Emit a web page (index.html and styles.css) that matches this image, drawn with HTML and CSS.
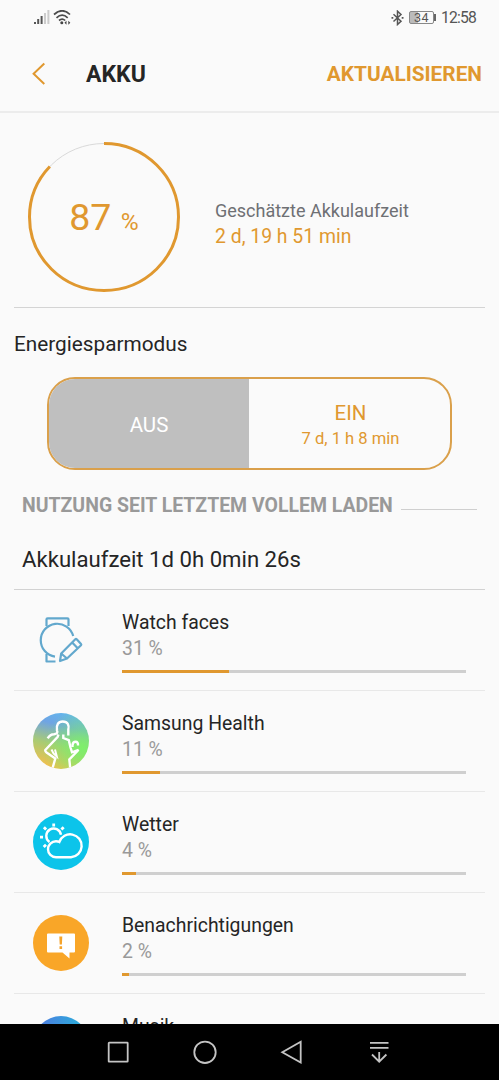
FILE: index.html
```html
<!DOCTYPE html>
<html lang="de">
<head>
  <meta charset="UTF-8" />
  <meta name="viewport" content="width=device-width, initial-scale=1.0"/>
  <title>Akku</title>
  <link rel="stylesheet" href="styles.css">
</head>
<body>
  <div class="screen">
    <div class="status-bar">
      <svg class="signal" width="37" height="16" viewBox="0 0 37 16">
        <g fill="#555">
          <rect x="0" y="12" width="2" height="2"/>
          <rect x="3.2" y="9" width="2" height="5"/>
          <rect x="6.6" y="6" width="2" height="8"/>
        </g>
        <g fill="#ccc">
          <rect x="10" y="3" width="2" height="11"/>
          <rect x="13.4" y="0" width="2" height="14"/>
        </g>
        <g fill="none" stroke="#4b4b4b" stroke-width="1.7">
          <path d="M20 4.5Q28.2-3 36 4.5"/>
          <path d="M22.5 7.8Q28.2 2.6 33.7 7.8"/>
          <path d="M25 10.5Q28.2 7.7 31.2 10.5"/>
        </g>
        <circle cx="27.8" cy="12.7" r="1.5" fill="#444"/>
        <path d="M30.5 12.7l2-2v4zM36.3 12.7l-2-2v4z" fill="#444"/>
      </svg>
      <div class="status-right">
        <svg width="13" height="16" viewBox="0 0 13 16" fill="none" stroke="#555" stroke-width="1.5">
          <path d="M2.5 4.3L10 11.2L6.5 14.5V1.2L10 4.5L2.5 11.5"/>
          <path d="M.5 7.9H2.3M10.7 7.9H12.5" stroke-width="1.8"/>
        </svg>
        <div class="battery"><span>34</span></div>
        <span class="clock">12:58</span>
      </div>
    </div>

    <div class="header">
      <svg width="14" height="24" viewBox="0 0 14 24" fill="none" stroke="#e0982f" stroke-width="2">
        <path d="M12.3 1.5L1.6 11.7L12.3 22"/>
      </svg>
      <h1>AKKU</h1>
      <button>AKTUALISIEREN</button>
    </div>

    <div class="summary">
      <div class="gauge">
        <svg width="154" height="152" viewBox="0 0 154 152" fill="none">
          <ellipse cx="77" cy="76" rx="74.5" ry="73.5" stroke="#d9d9d9"/>
          <ellipse class="gauge-value" cx="77" cy="76" rx="73.5" ry="74.5" pathLength="100" transform="rotate(-90 77 76)"/>
        </svg>
        <div class="gauge-text">87 <small>%</small></div>
      </div>
      <div class="estimate">
        <p>Geschätzte Akkulaufzeit</p>
        <p class="time">2 d, 19 h 51 min</p>
      </div>
    </div>

    <h2 class="mode-title">Energiesparmodus</h2>
    <div class="toggle">
      <div class="option off">AUS</div>
      <div class="option on">
        <span>EIN</span>
        <small>7 d, 1 h 8 min</small>
      </div>
    </div>

    <div class="section-title"><span>NUTZUNG SEIT LETZTEM VOLLEM LADEN</span></div>
    <div class="runtime"><span>Akkulaufzeit 1d 0h 0min 26s</span></div>

    <div class="list">
      <div class="item">
        <svg class="icon watch" width="56" height="56" viewBox="0 0 56 56" fill="none" stroke="#62a8cd" stroke-width="2.2" stroke-linejoin="round">
          <path d="M13.5 14V7.3q0-1 1-1H34.5q1 0 1 1V14"/>
          <path d="M40.2 24A16.5 16.5 0 1 0 22 44.6"/>
          <path d="M13.5 42V49.5H22.5"/>
          <path d="M27 49L28.2 41.5L42.3 27.2Q43 26.5 43.7 27.2L48 32Q48.6 32.7 48 33.3L34 46.5ZM28.2 41.5L34 46.5M39.2 30.5L44.7 36.3"/>
        </svg>
        <div class="info">
          <div class="name">Watch faces</div>
          <div class="percent">31 %</div>
          <div class="bar"><div style="width: 31%"></div></div>
        </div>
      </div>

      <div class="item">
        <svg class="icon health" width="56" height="56" viewBox="0 0 56 56" fill="none" stroke="#fff" stroke-width="2.4">
          <path d="M14.7 25.3Q17 21.3 21 21.2Q25.5 20.5 24 17.5C23 11.5 25.5 8.5 29.7 8.5C35 8.5 36.3 12.5 35.3 16.5V22.5"/>
          <path d="M25.5 21.5L24.5 24L12.3 37Q12 38.5 13.5 39.5L22.3 45.5L19.3 56"/>
          <path d="M30.3 21.5V25L35.8 27.2L37.5 34.5L39 39.3L45.5 37L36.3 46.5L37.3 56"/>
          <path d="M39.5 34V32Q40 28.8 42.5 28.8Q45.3 28.8 45 32.5"/>
          <path d="M18.5 36.5L20.5 40.5L23.8 43.5L22 36.5" stroke-width="2"/>
        </svg>
        <div class="info">
          <div class="name">Samsung Health</div>
          <div class="percent">11 %</div>
          <div class="bar"><div style="width: 11%"></div></div>
        </div>
      </div>

      <div class="item">
        <svg class="icon weather" width="56" height="56" viewBox="0 0 56 56" fill="none" stroke="#fff" stroke-width="2.4">
          <path d="M16.5 28A7.4 7.4 0 1 1 28 20.8"/>
          <path d="M23 43.3A8 8 0 0 1 23 27.3Q24.8 27.3 26.3 28A11.5 11.5 0 1 1 38 43.3Z"/>
          <path d="M20.7 9.5v3M30.7 13.3l-2.3 2.3M10.9 13.3l2.2 2.2M7 23.2h3M10.7 33l2.3-2.3" stroke-width="2.8"/>
        </svg>
        <div class="info">
          <div class="name">Wetter</div>
          <div class="percent">4 %</div>
          <div class="bar"><div style="width: 4%"></div></div>
        </div>
      </div>

      <div class="item">
        <svg class="icon notify" width="56" height="56" viewBox="0 0 56 56">
          <path d="M15 18.5H41Q42 18.5 42 19.5V36.5Q42 37.5 41 37.5H36.5V43.5L29.5 37.5H15Q14 37.5 14 36.5V19.5Q14 18.5 15 18.5Z" fill="#fff"/>
          <path d="M26.3 21.5h3l-.4 8h-2.2zM26.5 31.3h2.6v2.6h-2.6z" fill="#f5a32a"/>
        </svg>
        <div class="info">
          <div class="name">Benachrichtigungen</div>
          <div class="percent">2 %</div>
          <div class="bar"><div style="width: 2%"></div></div>
        </div>
      </div>

      <div class="item">
        <div class="icon music"></div>
        <div class="info">
          <div class="name">Musik</div>
        </div>
      </div>
    </div>

    <div class="nav-bar">
      <svg width="24" height="24" viewBox="0 0 24 24"><rect x="2.7" y="2.7" width="19" height="19" rx=".5"/></svg>
      <svg width="24" height="24" viewBox="0 0 24 24"><circle cx="12" cy="12.3" r="10.7"/></svg>
      <svg width="24" height="24" viewBox="0 0 24 24"><path d="M20.7 1.7V22.5L2.3 12.2Z"/></svg>
      <svg width="24" height="24" viewBox="0 0 24 24"><path d="M3 2.8H21.5M3 7.8H21.5M12.2 12V21.5M5 14.5L12.2 21.7L19.4 14.5"/></svg>
    </div>
  </div>
</body>
</html>
```
FILE: styles.css
```css
* {
  box-sizing: border-box;
}

body {
  margin: 0;
  font-family: Roboto, sans-serif;
  background: #fafafa;
  color: #252525;
}

h1, h2, p {
  margin: 0;
}

.screen {
  width: 499px;
  height: 1080px;
  display: flex;
  flex-direction: column;
  overflow: hidden;
}

.status-bar {
  height: 34px;
  flex: none;
  display: flex;
  justify-content: space-between;
  align-items: center;
  padding: 1px 23px 0 34px;
}

.status-right {
  display: flex;
  align-items: center;
  gap: 5px;
}

.battery {
  width: 25px;
  height: 13px;
  border: 1px solid #888;
  border-radius: 2px;
  background: linear-gradient(to right, #bbb 34%, transparent 34%);
  font-size: 12.5px;
  line-height: 11px;
  letter-spacing: 0.5px;
  color: #555;
  margin-right: 2px;
  display: flex;
  padding-left: 4px;
}

.battery::after {
  content: "";
  flex: none;
  width: 2px;
  height: 7px;
  margin: 2px 0 0 5px;
  background: #666;
}

.clock {
  font-size: 15.7px;
  letter-spacing: -0.8px;
  color: #555;
}

.header {
  height: 79px;
  flex: none;
  display: flex;
  align-items: center;
  padding: 3px 17px 0 32px;
  border-bottom: 2px solid #ececec;
}

.header h1 {
  margin-left: 40px;
  font-size: 23px;
  font-weight: bold;
}

.header button {
  margin-left: auto;
  padding: 0;
  border: none;
  background: none;
  font: bold 20.8px Roboto, sans-serif;
  color: #e0982f;
}

.summary {
  height: 195px;
  flex: none;
  display: flex;
  align-items: center;
  margin: 0 14px;
  padding: 14px 0 0 13px;
  border-bottom: 1px solid #d4d4d4;
}

.gauge {
  display: grid;
  place-items: center;
}

.gauge > * {
  grid-area: 1 / 1;
}

.gauge-value {
  stroke: #e0982f;
  stroke-width: 3;
  stroke-dasharray: 87 100;
}

.gauge-text {
  font-size: 37.5px;
  color: #e0982f;
}

.gauge-text small {
  font-size: 24.5px;
}

.estimate {
  margin-left: 34px;
  padding-top: 13px;
  font-size: 18px;
  line-height: 26px;
  color: #6e7074;
}

.estimate .time {
  font-size: 19.4px;
  color: #e0982f;
}

.mode-title {
  flex: none;
  margin: 23px 14px 0;
  font-size: 20.75px;
  line-height: 26px;
  font-weight: normal;
}

.toggle {
  height: 93px;
  flex: none;
  display: flex;
  margin: 20px 47px 0;
  border: 2px solid #daa04b;
  border-radius: 28px;
  overflow: hidden;
}

.option {
  flex: 1;
  display: flex;
  flex-direction: column;
  align-items: center;
  justify-content: center;
  padding-top: 3px;
  font-size: 20.5px;
  line-height: 26px;
}

.option.off {
  flex: 0 0 200px;
  background: #bfbfbf;
  color: #fff;
}

.option.on {
  padding-left: 2px;
  color: #e0982f;
}

.option small {
  font-size: 16.6px;
  line-height: 25px;
}

.section-title {
  flex: none;
  display: flex;
  margin: 23px 22px 0;
  font-size: 19.45px;
  line-height: 26px;
  font-weight: bold;
  color: #999;
}

.section-title::after {
  content: "";
  flex: 1;
  height: 1px;
  margin: 16px 0 0 8px;
  background: #cfcfcf;
}

.runtime {
  height: 71px;
  flex: none;
  margin: 0 14px;
  padding: 27px 8px 0;
  font-size: 22.15px;
  line-height: 26px;
  border-bottom: 1px solid #d2d2d2;
}

.list {
  flex: 1;
  min-height: 0;
  overflow: hidden;
}

.item {
  height: 101px;
  display: flex;
  margin: 0 14px;
  padding: 22px 19px 0;
  border-bottom: 1px solid #e8e8e8;
}

.icon {
  flex: none;
  width: 56px;
  height: 56px;
  border-radius: 50%;
}

.icon.watch {
  border-radius: 0;
}

.health {
  background: radial-gradient(circle at 88% 62%, #7df06a, rgba(125, 240, 106, 0) 65%),
    linear-gradient(15deg, #efc04e 10%, #a9cb74 42%, #6fa4e4 72%, #5dbdf0);
}

.weather {
  background: #0cc4ea;
}

.notify {
  background: #f9a628;
}

.music {
  background: linear-gradient(to right, #5276e0, #25b5da);
}

.info {
  flex: 1;
  margin-left: 33px;
  font-size: 19.4px;
  line-height: 26px;
  margin-top: -2px;
}

.percent {
  color: #999;
}

.bar {
  height: 3px;
  margin-top: 8px;
  background: #cfcfcf;
}

.bar div {
  height: 100%;
  background: #e0982f;
}

.nav-bar {
  height: 56px;
  flex: none;
  display: flex;
  align-items: center;
  gap: 63px;
  padding-left: 106px;
  background: #000;
}

.nav-bar svg {
  fill: none;
  stroke: #c4c4c4;
  stroke-width: 1.8;
}
```
